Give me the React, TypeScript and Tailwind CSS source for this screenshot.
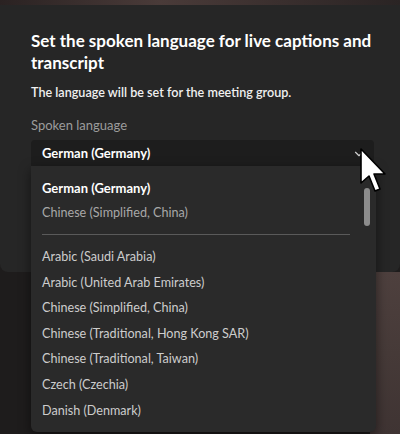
import { ChevronDown } from "lucide-react";

const languages = [
  "Arabic (Saudi Arabia)",
  "Arabic (United Arab Emirates)",
  "Chinese (Simplified, China)",
  "Chinese (Traditional, Hong Kong SAR)",
  "Chinese (Traditional, Taiwan)",
  "Czech (Czechia)",
  "Danish (Denmark)",
];

export default function App() {
  return (
    <div className="relative h-[434px] w-[400px] overflow-hidden bg-[#1e1c1c] pt-[5px] font-['Lato',sans-serif]">
      {/* photo strip on top */}
      <div className="absolute left-0 right-0 top-0 h-[5px] bg-[linear-gradient(90deg,#2a2222,#4a3b39_40%,#3a2f2e_70%,#2a2424)]" />
      {/* photo on the right, below the dialog */}
      <div className="absolute bottom-0 right-0 top-[272px] w-[30px] bg-[linear-gradient(180deg,#4e403e,#463a38_50%,#3f3433)]" />

      {/* dialog */}
      <div className="relative h-[267px] w-[400px] rounded-b-lg bg-[#262626] pl-[31px] pr-[26px] pt-[25px]">
        <h1 className="w-[355px] text-[17px] font-bold leading-[22px] text-white">
          Set the spoken language for live captions and transcript
        </h1>
        <p className="mt-[10px] text-[12.6px] font-semibold leading-[18px] text-[#f0f0f0]">
          The language will be set for the meeting group.
        </p>
        <p className="mt-[14px] text-[13px] leading-[18px] text-[#9c9c9c]">Spoken language</p>
        <div className="mt-[6px] flex h-[28px] w-[343px] items-center justify-between rounded-t-sm bg-[#1d1d1d] pl-[11px] pr-[8px]">
          <span className="text-[13px] font-bold text-white">German (Germany)</span>
          <ChevronDown size={14} className="text-[#cfcfcf]" />
        </div>
      </div>

      {/* dropdown list */}
      <div className="absolute left-[31px] top-[166px] h-[266px] w-[345px] rounded-b-md bg-[#2a2a2a] pl-[11px] shadow-[0_4px_12px_rgba(0,0,0,0.5)]">
        <div className="pt-[12px] text-[13px] font-bold leading-[20px] text-white">German (Germany)</div>
        <div className="mt-[5px] text-[12.6px] leading-[20px] text-[#a8a8a8]">Chinese (Simplified, China)</div>
        <div className="mr-[26px] mt-[11px] h-px bg-[#5a5a5a]" />
        <ul className="mt-[12px] flex flex-col">
          {languages.map((l) => (
            <li key={l} className="h-[25.6px] text-[12.6px] leading-[20px] text-[#cdcdcd]">
              {l}
            </li>
          ))}
        </ul>
        {/* scrollbar thumb */}
        <div className="absolute right-[6px] top-[22px] h-[38px] w-[6px] rounded-full bg-[#8c8c8c]" />
      </div>

      {/* mouse cursor */}
      <svg className="absolute left-[359px] top-[147px]" width="30" height="48" viewBox="0 0 30 48">
        <path
          d="M2 2 L2 36 L10 29 L16 44 L21 42 L15 27 L26 27 Z"
          fill="#fff"
          stroke="#000"
          strokeWidth="1.6"
          strokeLinejoin="round"
        />
      </svg>
    </div>
  );
}
